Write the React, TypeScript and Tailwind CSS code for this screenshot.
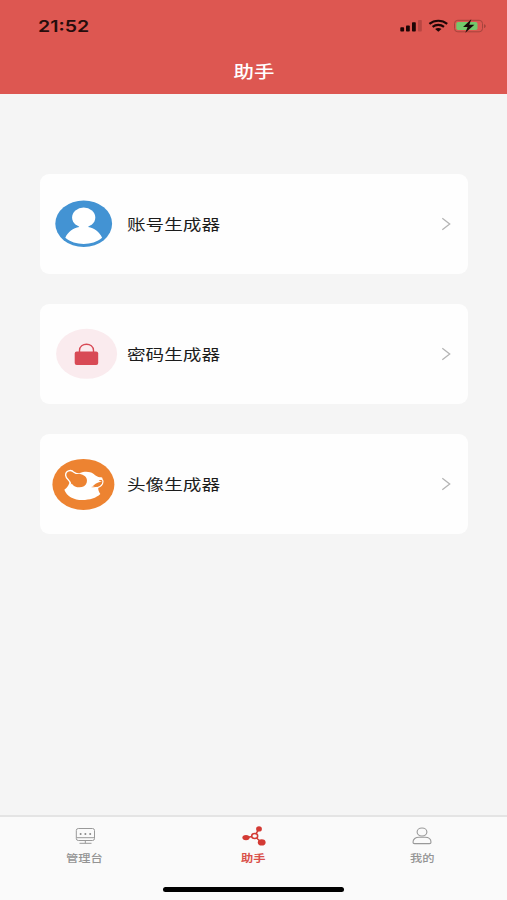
import type { ReactNode } from 'react'

function AccountIcon() {
  return (
    <svg className="w-[87px] h-[100px] shrink-0" viewBox="0 0 87 100">
      <ellipse cx="43.7" cy="49.7" rx="28.4" ry="23.3" fill="#4393d3" />
      <ellipse cx="43.7" cy="43.4" rx="11.6" ry="9.9" fill="#fff" />
      <path
        d="M39.2 50v3c-6 1.2-11.3 4.800-13.900 10.700 5 4.200 11.500 6.200 18.400 6.200s13.400-2 18.400-6.200c-2.600-5.900-7.900-9.500-13.900-10.700v-3z"
        fill="#fff"
      />
    </svg>
  )
}

function PasswordIcon() {
  return (
    <svg className="w-[87px] h-[100px] shrink-0" viewBox="0 0 87 100">
      <ellipse cx="46.6" cy="49.8" rx="30.5" ry="25" fill="#faebee" />
      <path d="M39.500 48.500v-2c0-8.400 14-8.400 14 0v2" fill="none" stroke="#d84a55" strokeWidth="1.4" />
      <rect x="34.700" y="47.400" width="23.500" height="13.600" rx="2" fill="#d84a55" />
    </svg>
  )
}

function AvatarIcon() {
  return (
    <svg className="w-[87px] h-[100px] shrink-0" viewBox="0 0 87 100">
      <ellipse cx="43.4" cy="50.4" rx="31" ry="25.500" fill="#ed8331" />
      <g transform="translate(10 22) scale(.3333)">
        <path
          d="M59 76c-1 11-7 19-16 25 7 20 29 31 54 31 22 0 42-6 54-18-5-7-7-13-6-21l-22-3-20-8z"
          fill="#fff"
        />
        <path
          d="M90 51c13-6 30-5 40 2 6 5 11 10 24 11l5 3-13 7 10 3c-14 1-20 6-27 13-8 5-17 5-26 3z"
          fill="#fff"
        />
        <path d="M148 70c7-2 11 1 11 7-1 9-7 15-15 17" fill="none" stroke="#fff" strokeWidth="3.500" />
        <path d="M123 93c9 0 13-3 18-8 5-4 10-6 14-6 0 6-4 10-11 12-7 3-14 4-21 2z" fill="#ed8331" />
        <path
          d="M62 86c1-14-14-15-15-28-1-14 16-19 25-9 5 5 11 6 21 4"
          fill="#ed8331"
          stroke="#fff"
          strokeWidth="4"
        />
        <path d="M64 66c4-12 18-14 29-11 13 3 21 13 17 25-3 9-13 15-24 14-12 0-22-8-23-19z" fill="#ed8331" />
      </g>
    </svg>
  )
}

function Card({ icon, label }: { icon: ReactNode; label: string }) {
  return (
    <li className="flex h-[100px] items-center rounded-[9px] bg-[#fefefe]">
      {icon}
      <span className="mt-[2px] origin-left scale-x-[1.24] whitespace-nowrap text-[15px] text-[#1c1c1c]">{label}</span>
      <svg className="ml-auto mr-[17px] h-4 w-[10px]" viewBox="0 0 10 16" fill="none" stroke="#b4b4b4" strokeWidth="1.3">
        <path d="M1.300 2.200 8.700 8l-7.400 5.800" />
      </svg>
    </li>
  )
}

function StatusBar() {
  return (
    <div className="flex h-[50px] items-center justify-between pl-[38px] pr-[19px] pt-[2px]">
      <span className="origin-left scale-x-[1.22] font-[Inter,sans-serif] text-base font-semibold text-[#260d0c]">
        21:52
      </span>
      <svg className="h-4 w-[88px]" viewBox="400 18 88 16">
        <g fill="#1d0505">
          <rect x="400.300" y="27.300" width="3.800" height="4.200" rx=".8" />
          <rect x="406" y="25.500" width="3.800" height="6" rx=".8" />
          <rect x="412" y="22.300" width="3.800" height="9.200" rx=".8" />
        </g>
        <rect x="418" y="20" width="3.800" height="11.500" rx=".8" fill="#b84642" />
        <g fill="none" stroke="#1d0505" strokeWidth="2.100">
          <path d="M429.400 23.900c5-4.300 12.800-4.300 17.800 0" />
          <path d="M432.600 26.900c3.300-2.700 8.100-2.700 11.400 0" />
        </g>
        <path d="M435.100 28.900c1.800-1.300 4.600-1.300 6.400 0l-3.200 2.800z" fill="#1d0505" />
        <rect x="454.500" y="20.300" width="28" height="11.500" rx="3.300" fill="none" stroke="#a5443d" />
        <rect x="456.300" y="22" width="21.200" height="8.100" rx="1.800" fill="#73c96c" />
        <path d="M484 24.200c2.300.6 2.300 3.200 0 3.800z" fill="#a5443d" />
        <path d="m471.300 19.300-8.300 7.600h4.600l-2.300 5.800 9.100-8h-5.100z" fill="#180808" />
      </svg>
    </div>
  )
}

function Tab({ icon, label, active = false }: { icon: ReactNode; label: string; active?: boolean }) {
  return (
    <div className={active ? 'flex-1 font-bold text-[#d9504a]' : 'flex-1 font-medium text-[#949494]'}>
      <div className="flex flex-col items-center pt-[7px]">
        {icon}
        <span className="mt-[3px] scale-x-[1.2] text-[10.2px] leading-4">{label}</span>
      </div>
    </div>
  )
}

function ConsoleIcon() {
  return (
    <svg className="h-6 w-7" viewBox="0 0 28 24" fill="none" stroke="#999" strokeWidth="1">
      <rect x="5.300" y="4.500" width="18.200" height="12" rx="2" />
      <path d="M5.500 13.700h17.800M14.300 16.500v2.800M8.500 19.300h12" />
      <g fill="#888" stroke="none">
        <circle cx="9.600" cy="9.900" r="1" />
        <circle cx="14.400" cy="9.900" r="1" />
        <circle cx="19.200" cy="9.900" r="1" />
      </g>
    </svg>
  )
}

function NodesIcon() {
  return (
    <svg className="h-6 w-7" viewBox="0 0 28 24" fill="#d33a34" stroke="#d33a34">
      <path d="m5.800 13.700 8.600-1.700 4.700-7M14.400 12l6.800 6.300" fill="none" strokeWidth="1.400" />
      <ellipse cx="6" cy="13.600" rx="3.600" ry="2.600" stroke="none" />
      <ellipse cx="19" cy="4.900" rx="2.900" ry="2.600" stroke="none" />
      <ellipse cx="21.700" cy="18.400" rx="3.900" ry="3.100" stroke="none" />
      <ellipse cx="14.700" cy="12" rx="3" ry="2.500" fill="#fafafa" strokeWidth="1.500" />
    </svg>
  )
}

function ProfileIcon() {
  return (
    <svg className="h-6 w-7" viewBox="0 0 28 24" fill="none" stroke="#999" strokeWidth="1.100">
      <ellipse cx="13" cy="8" rx="4.900" ry="4" />
      <path d="M4 18.300c0-3.500 2.700-5 6-5h6c3.300 0 6 1.500 6 5 0 .8-.7 1.300-1.500 1.300h-15c-.8 0-1.500-.5-1.500-1.300z" />
    </svg>
  )
}

export default function App() {
  return (
    <div className="flex h-screen flex-col bg-[#f5f5f5] font-['Liberation_Sans','Noto_Sans_CJK_SC',sans-serif]">
      <header className="h-[94px] bg-[#dd5751]">
        <StatusBar />
        <h1 className="mx-auto mt-[11px] w-fit scale-x-[1.2] text-[17px] font-medium leading-6 text-white">助手</h1>
      </header>
      <ul className="flex flex-1 flex-col gap-[30px] pl-10 pr-[39px] pt-20">
        <Card icon={<AccountIcon />} label="账号生成器" />
        <Card icon={<PasswordIcon />} label="密码生成器" />
        <Card icon={<AvatarIcon />} label="头像生成器" />
      </ul>
      <nav className="h-[85px] border-t-2 border-[#e4e4e4] bg-[#fafafa]">
        <div className="flex h-[70px]">
          <Tab icon={<ConsoleIcon />} label="管理台" />
          <Tab icon={<NodesIcon />} label="助手" active />
          <Tab icon={<ProfileIcon />} label="我的" />
        </div>
        <div className="mx-auto h-[5px] w-[181px] rounded-full bg-black" />
      </nav>
    </div>
  )
}
